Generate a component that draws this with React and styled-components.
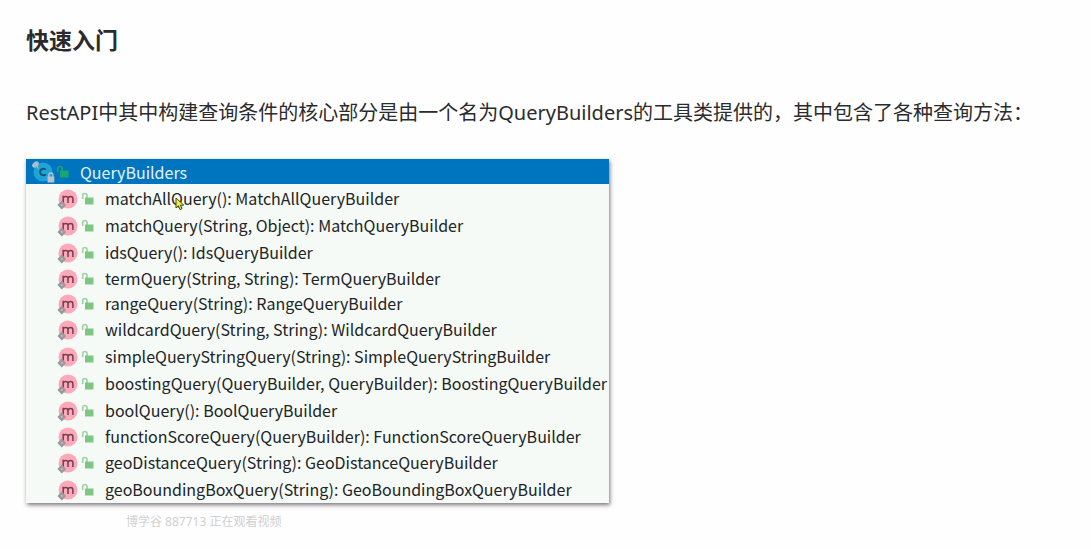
import React from "react";
import styled, { createGlobalStyle } from "styled-components";

const GlobalStyle = createGlobalStyle`
  * {
    box-sizing: border-box;
  }
  body {
    margin: 0;
    background: #fefefe;
    color: #2b2b2d;
    font-family: "Noto Sans", "Noto Sans CJK SC", sans-serif;
  }
`;

const Page = styled.main`
  padding: 24px 26px 16px;
`;
const Title = styled.h1`
  margin: 0 0 41px;
  font-size: 23px;
  line-height: 32px;
  font-weight: 700;
`;
const Intro = styled.p`
  margin: 0 0 30px;
  font-size: 20px;
  line-height: 32px;
`;
const Panel = styled.section`
  width: fit-content;
  min-width: 574px;
  max-width: 100%;
  overflow: hidden;
  background: #f5faf7;
  color: #222426;
  font-family: "Noto Sans CJK SC", sans-serif;
  font-size: 16px;
  box-shadow: 1px 2px 4px rgba(40, 30, 40, 0.6);
`;
const PanelHeader = styled.header`
  display: flex;
  align-items: center;
  height: 25px;
  padding-left: 4px;
  background: #0075bf;
  color: #e4f2fa;

  h2 {
    margin: 0 0 0 10px;
    font-size: 16px;
    line-height: 24px;
    font-weight: 400;
  }
`;
const MethodList = styled.ul`
  margin: 0;
  padding: 1px 0 0;
  list-style: none;
`;
const MethodRow = styled.li`
  display: flex;
  align-items: center;
  gap: 3px;
  height: ${({ $compact }) => ($compact ? "25px" : "27px")};
  padding: 0 2px 0 31px;
  line-height: 24px;
  white-space: nowrap;
`;
const Icon = styled.svg`
  display: block;
  flex: none;
`;
const Pointer = styled.svg`
  position: absolute;
  top: 11px;
  left: 70px;
`;
const Signature = styled.span`
  position: relative;
  margin-left: 7px;
  padding-bottom: 2px;
`;
const Watermark = styled.p`
  margin: 9px 0 0 100px;
  color: #d0d0d2;
  font-size: 12px;
  line-height: 20px;
`;

const methods = [
  { text: "matchAllQuery(): MatchAllQueryBuilder", pointer: true },
  { text: "matchQuery(String, Object): MatchQueryBuilder" },
  { text: "idsQuery(): IdsQueryBuilder" },
  { text: "termQuery(String, String): TermQueryBuilder", compact: true },
  { text: "rangeQuery(String): RangeQueryBuilder", compact: true },
  { text: "wildcardQuery(String, String): WildcardQueryBuilder" },
  { text: "simpleQueryStringQuery(String): SimpleQueryStringBuilder" },
  { text: "boostingQuery(QueryBuilder, QueryBuilder): BoostingQueryBuilder" },
  { text: "boolQuery(): BoolQueryBuilder" },
  { text: "functionScoreQuery(QueryBuilder): FunctionScoreQueryBuilder", compact: true },
  { text: "geoDistanceQuery(String): GeoDistanceQueryBuilder" },
  { text: "geoBoundingBoxQuery(String): GeoBoundingBoxQueryBuilder" },
];

const ClassIcon = () => (
  <Icon width="26" height="24" viewBox="0 0 26 24" aria-hidden="true">
    <circle cx="13" cy="12" r="9.5" fill="#1fa4d8" />
    <path
      d="M15.8 9.8C14.6 8.1 10.2 8 10.2 12s4.4 3.9 5.6 2.2"
      fill="none"
      stroke="#17506f"
      strokeWidth="1.8"
    />
    <ellipse cx="5.5" cy="4.5" rx="3.8" ry="2.5" transform="rotate(-38 5.5 4.5)" fill="#a9bfcb" />
    <path d="M6.5 6l2 2.5" stroke="#a9bfcb" strokeWidth="1.2" />
    <path d="M18.9 17v-2a2 2 0 0 1 4 0v2" fill="none" stroke="#b9c4d0" strokeWidth="1.4" />
    <rect x="17.5" y="16.5" width="6.8" height="6" fill="#b9c4d0" />
  </Icon>
);

const MethodIcon = () => (
  <Icon width="21" height="22" viewBox="0 0 21 22" aria-hidden="true">
    <circle cx="11" cy="11" r="9.5" fill="#fda9b9" />
    <path
      d="M6.2 15V7.8M6.2 10.4c.4-2.6 4.8-2.8 4.8.2V15m0-4.4c.4-2.9 4.9-3 4.9.2V15"
      fill="none"
      stroke="#743f50"
      strokeWidth="1.5"
    />
    <path d="M4.8 12.5L9.2 17l-4.4 4.4L.4 17z" fill="#9b989d" />
    <circle cx="4.8" cy="17" r="1.1" fill="#c5bcc2" />
  </Icon>
);

const UnlockIcon = ({ color, shackle }) => (
  <Icon width="14" height="14" viewBox="0 0 14 14" aria-hidden="true">
    <path
      d="M1.7 7V3.7a2.2 2.2 0 0 1 4.4 0V6"
      fill="none"
      stroke={shackle || color}
      strokeWidth="1.6"
    />
    <rect x="4" y="5.5" width="8.5" height="7" fill={color} />
  </Icon>
);

const MousePointer = () => (
  <Pointer width="10" height="14" viewBox="0 0 10 14" aria-hidden="true">
    <path
      d="M1 1v10l2.4-2.2L5 12.6l2-.9-1.7-3.5h3.5z"
      fill="#eef036"
      stroke="#44471f"
      strokeWidth="1"
    />
  </Pointer>
);

function App() {
  return (
    <>
      <GlobalStyle />
      <Page>
        <Title>快速入门</Title>
        <Intro>
          RestAPI中其中构建查询条件的核心部分是由一个名为QueryBuilders的工具类提供的，其中包含了各种查询方法：
        </Intro>
        <Panel>
          <PanelHeader>
            <ClassIcon />
            <UnlockIcon color="#16a66f" />
            <h2>QueryBuilders</h2>
          </PanelHeader>
          <MethodList>
            {methods.map(({ text, compact, pointer }) => (
              <MethodRow key={text} $compact={compact}>
                <MethodIcon />
                <UnlockIcon color="#7dc783" shackle="#9fd3a3" />
                <Signature>
                  {text}
                  {pointer && <MousePointer />}
                </Signature>
              </MethodRow>
            ))}
          </MethodList>
        </Panel>
        <Watermark>博学谷 887713 正在观看视频</Watermark>
      </Page>
    </>
  );
}

export default App;
